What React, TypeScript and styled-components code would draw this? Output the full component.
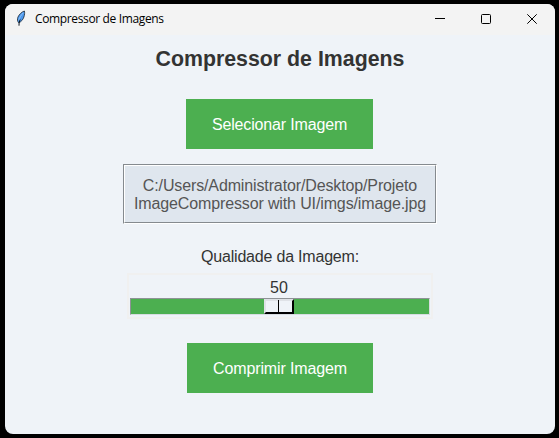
import React from 'react';
import styled, { createGlobalStyle } from 'styled-components';

const GlobalStyle = createGlobalStyle`
  * { box-sizing: border-box; }
  body { margin: 0; background: #000; }
`;

const Desktop = styled.div`
  width: 559px;
  height: 438px;
  padding: 4px 4px 4px 5px;
  background: #000;
  font-family: "Liberation Sans", Arial, sans-serif;
`;

const Window = styled.main`
  width: 550px;
  height: 430px;
  display: flex;
  flex-direction: column;
  border-radius: 8px;
  overflow: hidden;
  background: #eff3f8;
`;

const TitleBar = styled.header`
  height: 31px;
  flex: none;
  display: flex;
  align-items: center;
  padding: 0 0 2px 10px;
  background: #f3f3f3;
`;

const Caption = styled.span`
  flex: 1;
  margin: 1px 0 0 8px;
  font: 12px/16px "Open Sans", "Noto Sans", sans-serif;
  letter-spacing: -0.36px;
  color: #000;
  white-space: nowrap;
`;

const WindowButton = styled.button`
  width: 46px;
  height: 29px;
  padding: 0;
  border: 0;
  background: transparent;
  display: grid;
  place-items: center;
`;

const Content = styled.section`
  display: flex;
  flex-direction: column;
  align-items: center;
`;

const Heading = styled.h1`
  margin: 12px 0 0;
  height: 24px;
  font-size: 21.33px;
  line-height: 24px;
  font-weight: bold;
  color: #333;
  white-space: nowrap;
`;

const ActionButton = styled.button<{ $width: number; $top: number; $right?: number; $spacing: number }>`
  width: ${(p) => p.$width}px;
  height: 50px;
  margin: ${(p) => p.$top}px ${(p) => p.$right ?? 0}px 0 0;
  padding: 1px 0 0;
  border: 0;
  background: #4caf50;
  color: #fff;
  font: 16px/18px "Liberation Sans", Arial, sans-serif;
  letter-spacing: ${(p) => p.$spacing}px;
  white-space: nowrap;
`;

const PathFrame = styled.div`
  width: 314px;
  height: 60px;
  margin-top: 15px;
  border: 1px solid;
  border-color: #858a8f #fff #fff #858a8f;
`;

const PathText = styled.div`
  height: 58px;
  padding: 11px 0 0;
  border: 1px solid;
  border-color: #fff #858a8f #858a8f #fff;
  background: #dfe6ee;
  color: #555;
  font-size: 16px;
  line-height: 18px;
  letter-spacing: -0.13px;
  text-align: center;
  white-space: nowrap;
`;

const QualityLabel = styled.label`
  margin-top: 24px;
  height: 18px;
  font-size: 16px;
  line-height: 18px;
  letter-spacing: -0.2px;
  color: #333;
  white-space: nowrap;
`;

const Scale = styled.div`
  width: 306px;
  height: 46px;
  margin-top: 7px;
  padding: 4px 1px 0;
  border: 2px solid #f0f0f0;
`;

const ScaleValue = styled.div`
  height: 19px;
  padding-right: 2px;
  font-size: 16px;
  line-height: 18px;
  color: #333;
  text-align: center;
`;

const Trough = styled.div`
  height: 17px;
  border: 1px solid;
  border-color: #8e9296 #d8dce0 #d8dce0 #8e9296;
  background: #4caf50;
`;

const Thumb = styled.div`
  display: flex;
  width: 30px;
  height: 15px;
  margin-left: 133px;
  border: 2px solid;
  border-color: #dfe2e7 #000 #000 #dfe2e7;
  background: #eff3f8;
`;

const ThumbMark = styled.span`
  width: 1px;
  height: 12px;
  margin: -1px 0 0 12px;
  background: #000;
`;

function FeatherIcon() {
  return (
    <svg width="12" height="17" viewBox="0 0 12 17" aria-hidden="true">
      <path d="M9.4 1C6.8 1.8 4 4.5 2.9 7.2C2.2 9 2.3 11 3.6 12.8C6 12.1 8.1 9.5 8.9 7C9.7 4.7 9.8 2.5 9.4 1Z" fill="#4d98ec" stroke="#172432" strokeWidth=".8" />
      <path d="M8.1 3C6 5.2 4.3 8 3.8 10.5" fill="none" stroke="#8fc2fa" strokeWidth="1" />
      <path d="M5.2 9.5C4.4 11.2 4 13 4 15.7" fill="none" stroke="#0b1420" strokeWidth="1" />
    </svg>
  );
}

function MinimizeIcon() {
  return (
    <svg width="10" height="10" shapeRendering="crispEdges">
      <path d="M0 4.5H10" stroke="#000" />
    </svg>
  );
}

function MaximizeIcon() {
  return (
    <svg width="10" height="10">
      <rect x=".5" y=".5" width="9" height="9" rx="1" fill="none" stroke="#000" />
    </svg>
  );
}

function CloseIcon() {
  return (
    <svg width="10" height="10">
      <path d="M.3.3L9.7 9.7M9.7.3L.3 9.7" stroke="#000" />
    </svg>
  );
}

export default function App() {
  return (
    <>
      <GlobalStyle />
      <Desktop>
        <Window>
          <TitleBar>
            <FeatherIcon />
            <Caption>Compressor de Imagens</Caption>
            <WindowButton aria-label="Minimizar"><MinimizeIcon /></WindowButton>
            <WindowButton aria-label="Maximizar"><MaximizeIcon /></WindowButton>
            <WindowButton aria-label="Fechar"><CloseIcon /></WindowButton>
          </TitleBar>
          <Content>
            <Heading>Compressor de Imagens</Heading>
            <ActionButton $width={187} $top={28} $right={1} $spacing={-0.16}>Selecionar Imagem</ActionButton>
            <PathFrame>
              <PathText>C:/Users/Administrator/Desktop/Projeto<br />ImageCompressor with UI/imgs/image.jpg</PathText>
            </PathFrame>
            <QualityLabel>Qualidade da Imagem:</QualityLabel>
            <Scale>
              <ScaleValue>50</ScaleValue>
              <Trough><Thumb><ThumbMark /></Thumb></Trough>
            </Scale>
            <ActionButton $width={186} $top={24} $spacing={-0.13}>Comprimir Imagem</ActionButton>
          </Content>
        </Window>
      </Desktop>
    </>
  );
}
